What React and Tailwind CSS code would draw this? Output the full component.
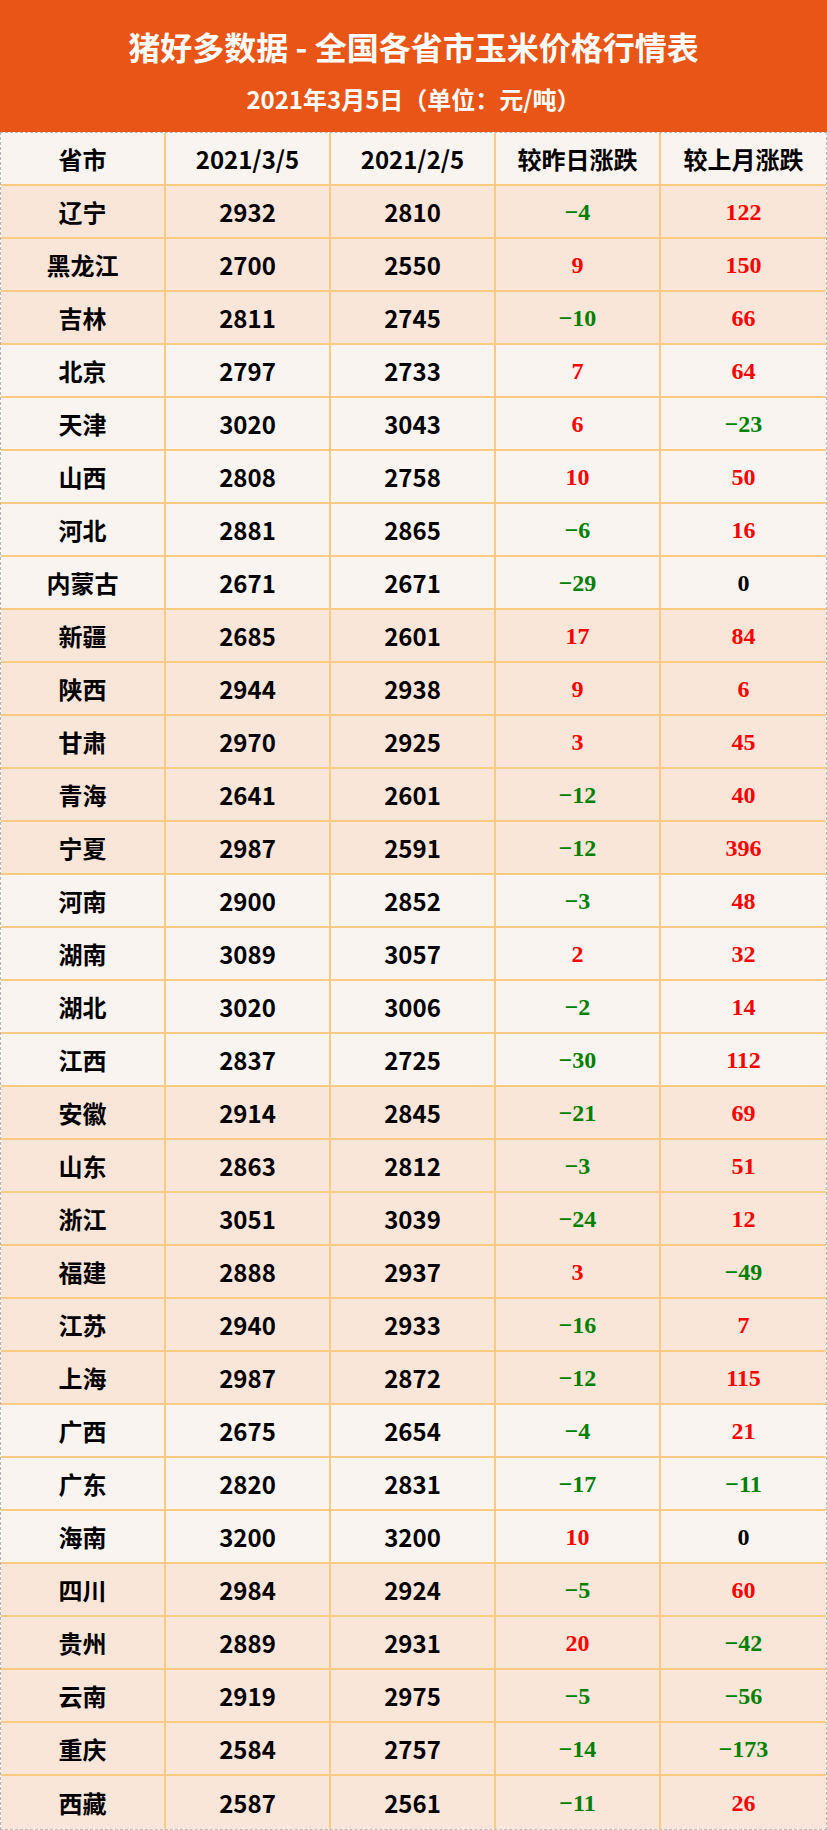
import React from "react";

const rows = [
  ["辽宁", 2932, 2810, -4, 122],
  ["黑龙江", 2700, 2550, 9, 150],
  ["吉林", 2811, 2745, -10, 66],
  ["北京", 2797, 2733, 7, 64],
  ["天津", 3020, 3043, 6, -23],
  ["山西", 2808, 2758, 10, 50],
  ["河北", 2881, 2865, -6, 16],
  ["内蒙古", 2671, 2671, -29, 0],
  ["新疆", 2685, 2601, 17, 84],
  ["陕西", 2944, 2938, 9, 6],
  ["甘肃", 2970, 2925, 3, 45],
  ["青海", 2641, 2601, -12, 40],
  ["宁夏", 2987, 2591, -12, 396],
  ["河南", 2900, 2852, -3, 48],
  ["湖南", 3089, 3057, 2, 32],
  ["湖北", 3020, 3006, -2, 14],
  ["江西", 2837, 2725, -30, 112],
  ["安徽", 2914, 2845, -21, 69],
  ["山东", 2863, 2812, -3, 51],
  ["浙江", 3051, 3039, -24, 12],
  ["福建", 2888, 2937, 3, -49],
  ["江苏", 2940, 2933, -16, 7],
  ["上海", 2987, 2872, -12, 115],
  ["广西", 2675, 2654, -4, 21],
  ["广东", 2820, 2831, -17, -11],
  ["海南", 3200, 3200, 10, 0],
  ["四川", 2984, 2924, -5, 60],
  ["贵州", 2889, 2931, 20, -42],
  ["云南", 2919, 2975, -5, -56],
  ["重庆", 2584, 2757, -14, -173],
  ["西藏", 2587, 2561, -11, 26],
];

// rows with the lighter background (regions alternate)
const light = new Set([3, 4, 5, 6, 7, 13, 14, 15, 16, 23, 24, 25]);

const sans = "font-['Noto_Sans_CJK_SC',sans-serif]";

function Change({ v }) {
  const color = v > 0 ? "text-[#ff0000]" : v < 0 ? "text-[#008000]" : "text-black";
  return (
    <span className={`font-['Liberation_Serif',serif] font-bold text-[24px] ${color}`}>
      {v < 0 ? "\u2212" + Math.abs(v) : v}
    </span>
  );
}

function Cell({ children, last }) {
  return (
    <div
      className={`flex items-center justify-center ${last ? "" : "border-r-2 border-[#fcca80]"}`}
    >
      {children}
    </div>
  );
}

export default function App() {
  return (
    <div className={`w-[827px] bg-white ${sans}`}>
      <div className="h-[132px] bg-[#e95516] flex flex-col items-center text-white font-bold">
        <div className="mt-[24px] text-[32px] leading-[44px]">猪好多数据 - 全国各省市玉米价格行情表</div>
        <div className="mt-[15px] text-[24px] leading-[32px]">2021年3月5日（单位：元/吨）</div>
      </div>

      <div className="border border-dashed border-[#b5b5b5]">
        <div className="grid grid-cols-5 h-[53px] bg-[#f9f4f0] border-b-2 border-[#fcca80] text-[24px] font-bold text-black">
          <Cell>省市</Cell>
          <Cell>2021/3/5</Cell>
          <Cell>2021/2/5</Cell>
          <Cell>较昨日涨跌</Cell>
          <Cell last>较上月涨跌</Cell>
        </div>
        {rows.map((r, i) => (
          <div
            key={r[0]}
            className={`grid grid-cols-5 h-[53px] ${
              i === rows.length - 1 ? "" : "border-b-2 border-[#fcca80]"
            } ${light.has(i) ? "bg-[#f9f4f0]" : "bg-[#fae5d9]"}`}
          >
            <Cell>
              <span className="text-[24px] font-bold text-black">{r[0]}</span>
            </Cell>
            <Cell>
              <span className="text-[24px] font-bold text-black">{r[1]}</span>
            </Cell>
            <Cell>
              <span className="text-[24px] font-bold text-black">{r[2]}</span>
            </Cell>
            <Cell>
              <Change v={r[3]} />
            </Cell>
            <Cell last>
              <Change v={r[4]} />
            </Cell>
          </div>
        ))}
      </div>
    </div>
  );
}
